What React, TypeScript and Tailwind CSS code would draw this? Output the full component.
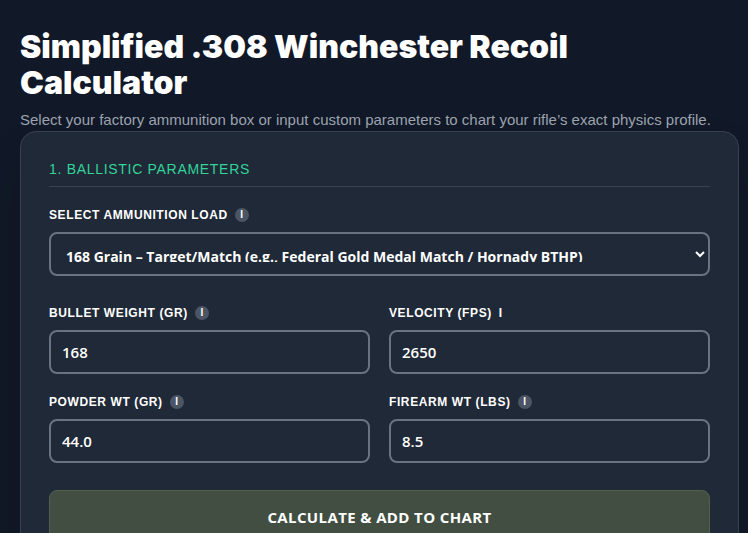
import { useState } from "react";
import type { ReactNode } from "react";

const loads = [
  {
    label: "168 Grain – Target/Match (e.g., Federal Gold Medal Match / Hornady BTHP)",
    value: "168",
  },
];

type InfoLabelProps = {
  htmlFor: string;
  badge?: boolean;
  children: ReactNode;
};

const InfoLabel = ({ htmlFor, badge = true, children }: InfoLabelProps) => {
  return (
    <label
      htmlFor={htmlFor}
      className="flex h-4 items-center gap-[7px] text-xs font-bold uppercase tracking-wider text-white"
    >
      {children}
      {badge ? (
        <span className="flex size-3.5 items-center justify-center rounded-full bg-[#4b5563] text-[10px] tracking-normal">
          i
        </span>
      ) : (
        <span>i</span>
      )}
    </label>
  );
};

type FieldProps = {
  id: string;
  label: string;
  initial: string;
  badge?: boolean;
};

const Field = ({ id, label, initial, badge }: FieldProps) => {
  const [value, setValue] = useState(initial);

  return (
    <div>
      <InfoLabel htmlFor={id} badge={badge}>
        {label}
      </InfoLabel>
      <input
        id={id}
        type="text"
        inputMode="decimal"
        value={value}
        onChange={(e) => setValue(e.target.value)}
        className="mt-[9px] block h-11 w-full rounded-lg border-2 border-[#6b7280] bg-[#1f2937] px-[11px] font-['Open_Sans',sans-serif] text-[15px] font-semibold text-white"
      />
    </div>
  );
};

export default function App() {
  const [load, setLoad] = useState("168");

  return (
    <div className="min-h-screen bg-[#111827] pt-[29px] pr-[9px] pb-10 pl-5 font-['Liberation_Sans',Arial,sans-serif]">
      <header>
        <h1 className="max-w-2xl font-['Inter',sans-serif] text-[32px] leading-9 font-black text-white">
          Simplified .308 Winchester Recoil Calculator
        </h1>
        <p className="mt-[7px] text-[15px] leading-[23px] text-[#9ca3af]">
          Select your factory ammunition box or input custom parameters to chart your rifle’s exact physics profile.
        </p>
      </header>

      <main className="rounded-2xl border border-[#374151] bg-[#1f2937] px-7 pt-[27px] pb-7 shadow-2xl">
        <h2 className="border-b border-[#374151] pb-[7px] text-sm uppercase tracking-wider text-[#34d399]">
          1. Ballistic Parameters
        </h2>

        <form onSubmit={(e) => e.preventDefault()}>
          <div className="mt-5">
            <InfoLabel htmlFor="load">Select Ammunition Load</InfoLabel>
            <select
              id="load"
              value={load}
              onChange={(e) => setLoad(e.target.value)}
              className="mt-[9px] block h-11 w-full rounded-lg border-2 border-[#6b7280] bg-[#1f2937] px-[11px] py-3 font-['Open_Sans',sans-serif] text-sm font-bold text-white"
            >
              {loads.map((item) => (
                <option key={item.value} value={item.value}>
                  {item.label}
                </option>
              ))}
            </select>
          </div>

          <div className="mt-[29px] grid grid-cols-2 gap-x-[19px] gap-y-5">
            <Field id="bullet" label="Bullet Weight (gr)" initial="168" />
            <Field id="velocity" label="Velocity (fps)" initial="2650" badge={false} />
            <Field id="powder" label="Powder Wt (gr)" initial="44.0" />
            <Field id="firearm" label="Firearm Wt (lbs)" initial="8.5" />
          </div>

          <button
            type="submit"
            className="mt-[27px] h-[54px] w-full rounded-lg border border-[#4f5f50] bg-[#414e41] font-['Open_Sans',sans-serif] text-[15px] font-bold uppercase tracking-wide text-white"
          >
            Calculate &amp; Add to Chart
          </button>
        </form>
      </main>
    </div>
  );
}
